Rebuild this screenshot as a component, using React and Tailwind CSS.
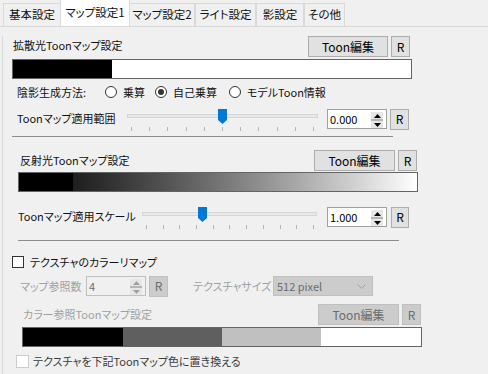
import React from 'react';

const tabs = [
  { label: '基本設定', w: 'w-[58px]' },
  { label: 'マップ設定1', w: 'w-[70px]', active: true },
  { label: 'マップ設定2', w: 'w-[66px]' },
  { label: 'ライト設定', w: 'w-[61px]' },
  { label: '影設定', w: 'w-[48px]' },
  { label: 'その他', w: 'w-[41px]' },
];

function Btn({ children, w, disabled }) {
  return (
    <div
      className={`${w} h-[21px] flex items-center justify-center border text-[12px] ${
        disabled ? 'bg-[#cccccc] border-[#bfbfbf] text-[#6d6d6d]' : 'bg-[#e1e1e1] border-[#adadad] text-black'
      }`}
    >
      {children}
    </div>
  );
}

function Arrows({ disabled }) {
  const c = disabled ? '#a0a0a0' : '#000';
  return (
    <div className="absolute right-[3px] top-[2px] w-[12px] h-[16px] flex flex-col bg-[#e6e6e6]">
      <div className="flex-1 flex items-center justify-center">
        <svg width="7" height="4" viewBox="0 0 7 4"><path d="M0 4 L3.5 0 L7 4 Z" fill={c} /></svg>
      </div>
      <div className="h-[2px] bg-[#b5b5b5]" />
      <div className="flex-1 flex items-center justify-center">
        <svg width="7" height="4" viewBox="0 0 7 4"><path d="M0 0 L3.5 4 L7 0 Z" fill={c} /></svg>
      </div>
    </div>
  );
}

function Spin({ value, w, disabled }) {
  return (
    <div
      className={`relative shrink-0 ${w} h-[20px] border flex items-center pl-[2px] ${
        disabled ? 'border-[#bfbfbf] bg-[#f0f0f0] text-[#6d6d6d]' : 'border-[#a0a0a0] bg-white text-black'
      }`}
    >
      {value}
      <Arrows disabled={disabled} />
    </div>
  );
}

function Slider({ w, thumb, tickW }) {
  return (
    <div className={`relative shrink-0 ${w} h-[20px]`}>
      <div className="absolute left-0 right-0 top-[5px] h-[4px] bg-[#e7eaea] border border-[#d6d6d6]" />
      <svg className={`absolute top-0 ${thumb}`} width="9" height="15" viewBox="0 0 9 15">
        <path d="M0 0 H9 V11 L4.5 15 L0 11 Z" fill="#0078d7" />
      </svg>
      <div className={`absolute left-[4px] top-[18px] ${tickW} h-[4px] flex justify-between`}>
        {Array.from({ length: 11 }).map((_, i) => (
          <div key={i} className="w-px h-[4px] bg-[#b4b4b4]" />
        ))}
      </div>
    </div>
  );
}

function Radio({ checked, label, w }) {
  return (
    <div className={`flex items-center ${w}`}>
      <div className="w-[12px] h-[12px] rounded-full border border-[#333] bg-white flex items-center justify-center">
        {checked && <div className="w-[6px] h-[6px] rounded-full bg-[#333]" />}
      </div>
      <span className="ml-[6px]">{label}</span>
    </div>
  );
}

export default function App() {
  return (
    <div
      className="w-[488px] h-[374px] bg-[#f0f0f0] overflow-hidden text-[11px] leading-none text-[#111] whitespace-nowrap [font-feature-settings:'palt']"
      style={{ fontFamily: '"Noto Sans CJK JP", "Noto Sans", sans-serif' }}
    >
      {/* tabs */}
      <div className="h-[27px] flex items-end pl-[3px] border-b border-[#d9d9d9] text-[11.5px]">
        {tabs.map((t) => (
          <div
            key={t.label}
            className={`${t.w} flex items-center justify-center border border-[#d9d9d9] border-b-0 ${
              t.active ? 'h-[27px] bg-white -mx-[1px] relative z-10' : 'h-[23px] bg-[#f0f0f0]'
            }`}
          >
            {t.label}
          </div>
        ))}
      </div>

      <div className="ml-[2px] border-l border-[#d9d9d9] h-[347px]">
        {/* 拡散光 */}
        <div className="ml-[9px] w-[400px]">
          <div className="mt-[9px] h-[21px] flex items-center">
            <span className="pl-[1px] mb-[3px]">拡散光Toonマップ設定</span>
            <div className="ml-auto mr-[2px] flex gap-[3px]">
              <Btn w="w-[80px]">Toon編集</Btn>
              <Btn w="w-[19px]">R</Btn>
            </div>
          </div>
          <div className="mt-[2px] h-[20px] border border-[#646464] flex">
            <div className="w-[99px] bg-black" />
            <div className="flex-1 bg-white" />
          </div>
          <div className="mt-[5px] h-[16px] flex items-center pl-[5px]">
            <span className="w-[88px]">陰影生成方法:</span>
            <Radio label="乗算" w="w-[50px]" />
            <Radio label="自己乗算" checked w="w-[74px]" />
            <Radio label="モデルToon情報" />
          </div>
          <div className="mt-[9px] h-[20px] flex items-center pl-[5px]">
            <span className="w-[110px] shrink-0 mb-[2px]">Toonマップ適用範囲</span>
            <Slider w="w-[191px]" thumb="left-[91px]" tickW="w-[183px]" />
            <div className="ml-[9px]">
              <Spin value="0.000" w="w-[60px]" />
            </div>
            <div className="ml-[3px]">
              <Btn w="w-[19px]">R</Btn>
            </div>
          </div>
          <div className="mt-[7px] h-px w-[381px] bg-[#8c8c8c]" />
        </div>

        {/* 反射光 */}
        <div className="ml-[15px] w-[400px]">
          <div className="mt-[13px] h-[21px] flex items-center">
            <span className="pl-[2px]">反射光Toonマップ設定</span>
            <div className="ml-auto mr-[1px] flex gap-[3px]">
              <Btn w="w-[81px]">Toon編集</Btn>
              <Btn w="w-[19px]">R</Btn>
            </div>
          </div>
          <div className="mt-[1px] h-[20px] border border-[#646464] flex">
            <div className="w-[54px] bg-black" />
            <div className="flex-1 bg-gradient-to-r from-[#1e1e1e] to-white" />
          </div>
          <div className="mt-[15px] h-[20px] flex items-center">
            <span className="w-[124px] shrink-0 mb-[1px]">Toonマップ適用スケール</span>
            <Slider w="w-[175px]" thumb="left-[56px]" tickW="w-[168px]" />
            <div className="ml-[10px]">
              <Spin value="1.000" w="w-[60px]" />
            </div>
            <div className="ml-[4px]">
              <Btn w="w-[18px]">R</Btn>
            </div>
          </div>
          <div className="mt-[13px] h-px w-[381px] bg-[#8c8c8c]" />
        </div>

        {/* テクスチャ */}
        <div className="ml-[9px] w-[420px]">
          <div className="mt-[15px] h-[12px] flex items-center">
            <div className="w-[12px] h-[12px] border border-[#333] bg-white" />
            <span className="ml-[6px]">テクスチャのカラーリマップ</span>
          </div>
          <div className="mt-[8px] h-[20px] flex items-center text-[#a0a0a0]">
            <span className="pl-[8px] w-[74px] shrink-0">マップ参照数</span>
            <Spin value="4" w="w-[60px]" disabled />
            <div className="ml-[3px]">
              <Btn w="w-[19px]" disabled>R</Btn>
            </div>
            <span className="ml-[25px] w-[80px] shrink-0">テクスチャサイズ</span>
            <div className="w-[100px] shrink-0 h-[20px] bg-[#cccccc] border border-[#bfbfbf] flex items-center pl-[3px] text-[#6d6d6d]">
              512 pixel
              <svg className="ml-auto mr-[6px]" width="9" height="5" viewBox="0 0 9 5">
                <path d="M0.5 0.5 L4.5 4.5 L8.5 0.5" fill="none" stroke="#a0a0a0" strokeWidth="1" />
              </svg>
            </div>
          </div>
          <div className="ml-[10px] w-[400px]">
            <div className="mt-[8px] h-[21px] flex items-center text-[#a0a0a0]">
              <span className="pl-[1px]">カラー参照Toonマップ設定</span>
              <div className="ml-auto mr-[1px] flex gap-[3px]">
                <Btn w="w-[81px]" disabled>Toon編集</Btn>
                <Btn w="w-[19px]" disabled>R</Btn>
              </div>
            </div>
            <div className="mt-[2px] h-[20px] border border-[#646464] flex">
              <div className="w-[100px] bg-black" />
              <div className="w-[99px] bg-[#5f5f5f]" />
              <div className="w-[99px] bg-[#c0c0c0]" />
              <div className="flex-1 bg-white" />
            </div>
          </div>
          <div className="mt-[8px] ml-[4px] h-[13px] flex items-center">
            <div className="w-[13px] h-[13px] border border-[#cccccc] bg-white" />
            <span className="ml-[4px] text-[#3c3c3c]">テクスチャを下記Toonマップ色に置き換える</span>
          </div>
        </div>
      </div>
    </div>
  );
}
